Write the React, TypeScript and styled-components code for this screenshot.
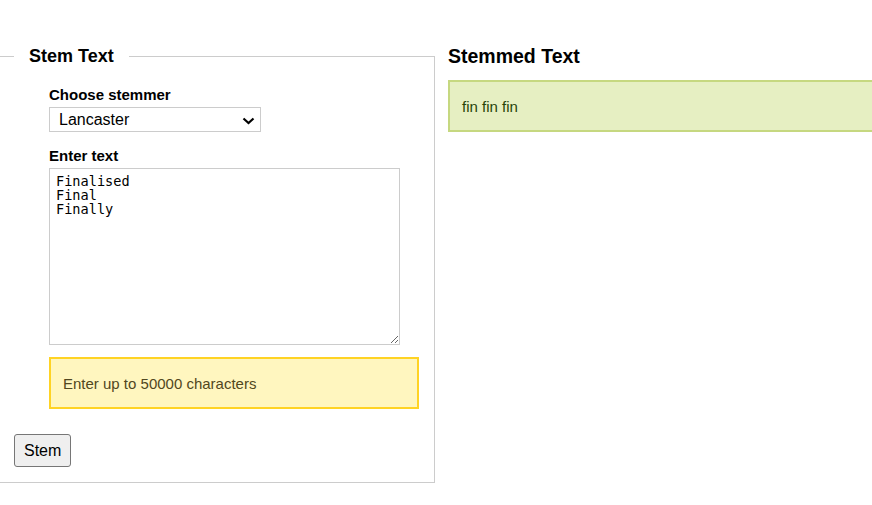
import React, { useState } from "react";
import styled, { createGlobalStyle } from "styled-components";

const GlobalStyle = createGlobalStyle`
  html, body { margin: 0; padding: 0; background: #fff; }
  body { font-family: "Liberation Sans", Arial, sans-serif; color: #000; overflow: hidden; }
`;

const Page = styled.div`
  display: flex;
  align-items: flex-start;
  padding-top: 46px;
  width: 900px;
`;

const Fieldset = styled.fieldset`
  box-sizing: border-box;
  width: 443px;
  margin: 0 13px 0 -8px;
  padding: 0 14px 15px 21px;
  border: 1px solid #ccc;
  min-width: 0;
`;

const Legend = styled.legend`
  font-size: 18px;
  line-height: 20px;
  font-weight: bold;
  padding: 0 15px 0 15px;
`;

const FormBody = styled.div`
  display: flex;
  flex-direction: column;
  align-items: flex-start;
  padding-left: 35px;
  padding-top: 19px;
`;

const Label = styled.label`
  display: block;
  font-size: 15px;
  line-height: 18px;
  font-weight: bold;
  padding-top: 1px;
  margin-bottom: 2.5px;
`;

const SelectWrap = styled.div`
  position: relative;
  width: 212px;
  margin-bottom: 14.5px;
`;

const Select = styled.select`
  appearance: none;
  box-sizing: border-box;
  display: block;
  width: 212px;
  height: 25px;
  padding: 1px 0 0 9px;
  border: 1px solid #ccc;
  background: #fff;
  font-family: "Liberation Sans", Arial, sans-serif;
  font-size: 16px;
  color: #000;
  outline: none;
`;

const Chevron = styled.svg`
  position: absolute;
  left: 193px;
  top: 10px;
  width: 13px;
  height: 8px;
  pointer-events: none;
`;

const TextArea = styled.textarea`
  box-sizing: border-box;
  display: block;
  width: 351px;
  height: 177px;
  margin: 0 0 12px 0;
  padding: 5px 6px;
  border: 1px solid #ccc;
  font-family: "DejaVu Sans Mono", monospace;
  font-size: 13.6px;
  line-height: 14px;
  color: #000;
  resize: both;
  outline: none;
`;

const Box = styled.div<{ $tone: "notice" | "success"; $width?: string }>`
  box-sizing: border-box;
  width: ${(p) => p.$width ?? "auto"};
  padding: 13px 12px 11px 12px;
  border: 2px solid ${(p) => (p.$tone === "notice" ? "#ffd324" : "#c6d880")};
  background: ${(p) => (p.$tone === "notice" ? "#fff6bf" : "#e6efc2")};
  color: ${(p) => (p.$tone === "notice" ? "#514721" : "#264409")};
  font-size: 15px;
  line-height: 24px;
`;

const Button = styled.button`
  box-sizing: border-box;
  height: 33px;
  margin-top: 25px;
  padding: 1px 9px 0 9px;
  background: #efefef;
  border: 1px solid #767676;
  border-radius: 3px;
  font-family: "Liberation Sans", Arial, sans-serif;
  font-size: 16px;
  color: #000;
`;

const ResultColumn = styled.div`
  flex: 1;
  min-width: 440px;
  margin-top: -2px;
`;

const Heading = styled.h2`
  margin: 0 0 12px 0;
  font-size: 19.5px;
  line-height: 24px;
  font-weight: bold;
`;

export default function App() {
  const [stemmer, setStemmer] = useState("lancaster");
  const [text, setText] = useState("Finalised\nFinal\nFinally");
  return (
    <>
      <GlobalStyle />
      <Page>
        <Fieldset>
          <Legend>Stem Text</Legend>
          <FormBody>
            <Label htmlFor="stemmer">Choose stemmer</Label>
            <SelectWrap>
              <Select id="stemmer" value={stemmer} onChange={(e) => setStemmer(e.target.value)}>
                <option value="lancaster">Lancaster</option>
                <option value="porter">Porter</option>
                <option value="snowball">Snowball</option>
              </Select>
              <Chevron viewBox="0 0 13 8">
                <path d="M1.5 1.5 L6.5 6 L11.5 1.5" fill="none" stroke="#000" strokeWidth="2.2" />
              </Chevron>
            </SelectWrap>
            <Label htmlFor="text">Enter text</Label>
            <TextArea id="text" value={text} onChange={(e) => setText(e.target.value)} spellCheck={false} />
            <Box $tone="notice" $width="370px">Enter up to 50000 characters</Box>
          </FormBody>
          <Button type="button">Stem</Button>
        </Fieldset>
        <ResultColumn>
          <Heading>Stemmed Text</Heading>
          <Box $tone="success">fin fin fin</Box>
        </ResultColumn>
      </Page>
    </>
  );
}
